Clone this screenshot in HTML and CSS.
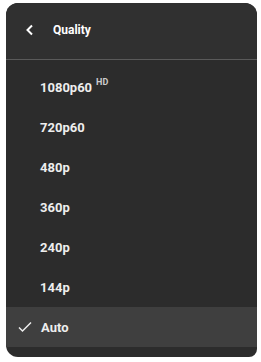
FILE: index.html
```html
<!DOCTYPE html>
<html lang="en">
<head>
  <meta charset="UTF-8">
  <meta name="viewport" content="width=device-width, initial-scale=1.0">
  <link rel="stylesheet" href="styles.css">
  <title>Quality</title>
</head>
<body>
  <div class="menu">
    <div class="menu-header">
      <svg class="back" width="12" height="12" viewBox="0 0 12 12">
        <path d="M8 1.5 L3.5 6 L8 10.5" fill="none" stroke="#fff" stroke-width="2"/>
      </svg>
      <span class="title">Quality</span>
    </div>
    <div class="menu-list">
      <div class="item">1080p60<span class="badge">HD</span></div>
      <div class="item">720p60</div>
      <div class="item">480p</div>
      <div class="item">360p</div>
      <div class="item">240p</div>
      <div class="item">144p</div>
      <div class="item selected">
        <svg class="check" width="14" height="12" viewBox="0 0 14 12">
          <path d="M1 6.5 L4.5 10 L13 1.5" fill="none" stroke="#eee" stroke-width="1.5"/>
        </svg>
        Auto
      </div>
    </div>
  </div>
</body>
</html>
```

FILE: styles.css
```css
body {
  margin: 0;
  background: #fff;
  font-family: Roboto, "Liberation Sans", Arial, sans-serif;
}

.menu {
  margin: 3px 0 0 6px;
  width: 251px;
  height: 354px;
  background-color: #2c2c2c;
  border-radius: 12px 12px 8px 12px;
  overflow: hidden;
  color: #eee;
}

.menu-header {
  display: flex;
  align-items: center;
  height: 56px;
  border-bottom: 1px solid #5a5a5a;
  background-color: #303030;
}

.back {
  margin-left: 18px;
  margin-top: -2px;
}

.title {
  margin-left: 17px;
  margin-top: -2px;
  font-size: 12px;
  font-weight: bold;
  color: #fff;
}

.menu-list {
  padding-top: 7px;
}

.item {
  display: flex;
  align-items: center;
  height: 40px;
  padding-left: 34px;
  font-size: 13px;
  font-weight: bold;
}

.badge {
  align-self: flex-start;
  margin-top: 10px;
  margin-left: 4px;
  font-size: 9px;
  color: #ccc;
}

.selected {
  background-color: #3f3f3f;
  padding-left: 12px;
}

.check {
  margin-right: 9px;
}
```
